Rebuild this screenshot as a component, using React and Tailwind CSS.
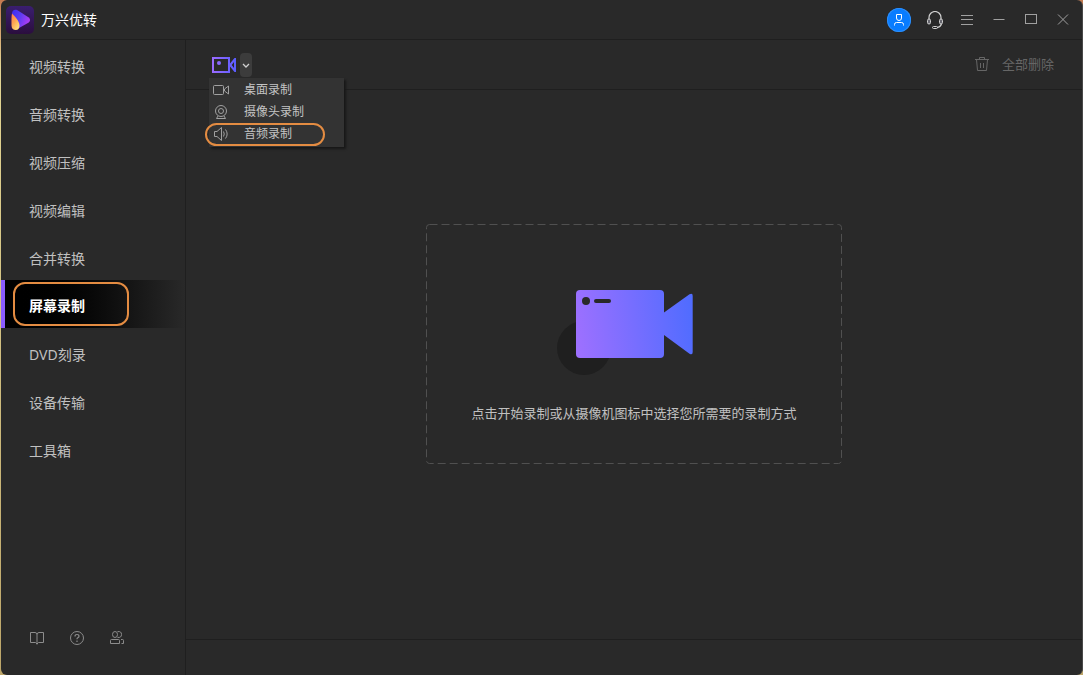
import React, { useState } from 'react';

const navItems = [
  '视频转换',
  '音频转换',
  '视频压缩',
  '视频编辑',
  '合并转换',
  '屏幕录制',
  'DVD刻录',
  '设备传输',
  '工具箱',
];

function Icon({ children, className, size = 16 }) {
  return (
    <svg
      aria-hidden="true"
      width={size}
      height={size}
      viewBox={`0 0 ${size} ${size}`}
      fill="none"
      stroke="currentColor"
      className={className}
    >
      {children}
    </svg>
  );
}

function Logo() {
  return (
    <svg aria-hidden="true" width="28" height="28" viewBox="0 0 28 28">
      <defs>
        <linearGradient id="logoBg" x1="0" y1="0" x2="0" y2="1">
          <stop offset="0" stopColor="#3a1e70" />
          <stop offset="1" stopColor="#2b0e3e" />
        </linearGradient>
        <linearGradient id="logoPlay" x1="0" y1="0" x2="1" y2="0.4">
          <stop offset="0" stopColor="#3a2cf0" />
          <stop offset="0.5" stopColor="#5a3cf2" />
          <stop offset="1" stopColor="#a93cf5" />
        </linearGradient>
        <linearGradient id="logoDrop" x1="0" y1="0" x2="0.7" y2="1">
          <stop offset="0" stopColor="#ff7a4a" />
          <stop offset="0.5" stopColor="#ffa552" />
          <stop offset="1" stopColor="#ffe07a" />
        </linearGradient>
      </defs>
      <rect width="28" height="28" rx="5" fill="url(#logoBg)" />
      <path
        d="M6 7.500C6 4.500 8.500 3 11.500 4.300L22.800 11.500Q25.300 14 22.800 16.500L13 22Z"
        fill="url(#logoPlay)"
      />
      <path
        d="M6 7.500C9 10.500 13.500 15 13.500 19.500C13.500 22.500 12 24 9.800 24C7.300 24 5.500 22.500 5.500 19.500C5.500 15 5.300 10 6 7.500Z"
        fill="url(#logoDrop)"
      />
    </svg>
  );
}

function TitleBar() {
  return (
    <header className="flex h-10 shrink-0 items-center border-b border-[#1f1f1f] pr-[11px] pl-[5px]">
      <Logo />
      <h1 className="ml-[7px] text-[14px] leading-5 text-white">万兴优转</h1>
      <div className="ml-auto flex items-center text-[#a0a0a0]">
        <button
          type="button"
          aria-label="账户"
          className="mr-3 flex size-6 items-center justify-center rounded-full bg-[#087cff] text-white ring-1 ring-[#2f8ff8] ring-inset"
        >
          <Icon size={12}>
            <path d="M3.500 0.500H8.500V4Q8.500 6.500 6 6.500Q3.500 6.500 3.500 4Z" />
            <path d="M1.500 11.500V10.500Q1.500 8.500 3.500 8.500H8.500Q10.500 8.500 10.500 10.500V11.500" />
          </Icon>
        </button>
        <button type="button" aria-label="客服" className="mr-1 flex size-6 items-center justify-center text-[#d0d0d0]">
          <Icon size={18}>
            <path d="M3 8V6.500A6 6 0 0 1 15 6.500V8M15.500 13Q14.500 16 11 16.500" strokeWidth="1.200" />
            <rect x="1.500" y="8" width="3" height="5" rx="1.500" fill="#686870" />
            <rect x="13.500" y="8" width="3" height="5" rx="1.500" fill="#686870" />
            <rect x="6.500" y="15.500" width="5" height="2" rx="1" />
          </Icon>
        </button>
        <button type="button" aria-label="菜单" className="flex h-8 w-8 items-center justify-center">
          <Icon>
            <path d="M2 3.500H14M2 7.500H14M2 12.500H14" />
          </Icon>
        </button>
        <button type="button" aria-label="最小化" className="flex h-8 w-8 items-center justify-center">
          <Icon>
            <path d="M2.500 7.500H13.500" />
          </Icon>
        </button>
        <button type="button" aria-label="最大化" className="flex h-8 w-8 items-center justify-center">
          <Icon>
            <rect x="2.500" y="2.500" width="11" height="9" />
          </Icon>
        </button>
        <button type="button" aria-label="关闭" className="flex h-8 w-6 items-center justify-center pl-2">
          <Icon>
            <path d="M3 2.500L13 12.500M13 2.500L3 12.500" />
          </Icon>
        </button>
      </div>
    </header>
  );
}

function Sidebar({ active, onSelect }) {
  return (
    <aside className="flex w-[185px] shrink-0 flex-col border-r border-[#1f1f1f]">
      <nav>
        {navItems.map((label) => {
          const on = label === active;
          return (
            <button
              key={label}
              type="button"
              onClick={() => onSelect(label)}
              aria-current={on ? 'page' : undefined}
              className={
                on
                  ? 'relative flex h-12 w-full items-center border-l-4 border-[#8b5cff] bg-linear-to-r from-black to-[#292929] pt-0.5 pl-6 text-left text-[14px] font-bold text-white'
                  : 'flex h-12 w-full items-center pt-1 pl-7 text-left text-[14px] text-[#c0c0c0]'
              }
            >
              {label}
              {on && (
                <span className="pointer-events-none absolute inset-y-0.5 left-2 w-[116px] rounded-xl border-2 border-[#e48c42]" />
              )}
            </button>
          );
        })}
      </nav>
      <div className="mt-auto flex gap-6 pb-[29px] pl-7 text-[#8c8c8c]">
        <button type="button" aria-label="使用指南">
          <Icon>
            <path d="M1.500 2.500H6Q8 2.500 8 4.500V14.500M14.500 2.500H10Q8 2.500 8 4.500M1.500 2.500V12.500H6.500L8 14L9.500 12.500H14.500V2.500" />
          </Icon>
        </button>
        <button type="button" aria-label="帮助">
          <Icon>
            <circle cx="8" cy="8" r="6.500" />
            <path d="M6 6.500Q6 4.500 8 4.500Q10 4.500 10 6.200Q10 7.200 8.800 7.700Q8 8.100 8 9.200M8 10.500V12" strokeWidth="1.200" />
          </Icon>
        </button>
        <button type="button" aria-label="社区">
          <Icon>
            <ellipse cx="6" cy="4.500" rx="2.500" ry="3" />
            <path d="M8.500 1.600Q12.500 1 12.500 4.500Q12.500 8 8.500 7.400" />
            <path d="M1.500 13.500V10.500Q1.500 9.500 2.500 9.500H9.500Q10.500 9.500 10.500 10.500V13.500ZM12 9.500H13.500Q14.500 9.500 14.500 10.500V13.500H12.500" />
          </Icon>
        </button>
      </div>
    </aside>
  );
}

function RecordMenu() {
  const items = [
    {
      label: '桌面录制',
      icon: (
        <>
          <rect x="0.500" y="3.500" width="10" height="9" rx="1" />
          <path d="M11.500 7L15.500 4V12L11.500 9Z" />
        </>
      ),
    },
    {
      label: '摄像头录制',
      icon: (
        <>
          <circle cx="8" cy="7" r="5.500" />
          <circle cx="8" cy="7" r="2.500" />
          <path d="M5 12L3.500 14.500H12.500L11 12" />
        </>
      ),
    },
    {
      label: '音频录制',
      icon: (
        <>
          <path d="M1.500 5.500H4L8.500 1.500V14.500L4 10.500H1.500Z" />
          <path d="M10.500 5.500Q12 8 10.500 10.500M12.500 3.500Q15.800 8 12.500 12.500" />
        </>
      ),
    },
  ];
  return (
    <div
      role="menu"
      className="absolute top-[38px] left-[23px] w-[135px] bg-[#333333] pt-px pb-0.5 shadow-[2px_2px_2px_#181818]"
    >
      {items.map(({ label, icon }, i) => (
        <button
          key={label}
          type="button"
          role="menuitem"
          className="relative flex h-[22px] w-full items-center gap-[15px] pl-1 text-[12px] leading-4 text-[#c4c4c4]"
        >
          <Icon className="text-[#a0a0a0]">{icon}</Icon>
          {label}
          {i === 2 && (
            <span className="pointer-events-none absolute top-0 -bottom-px -left-1 w-[120px] rounded-full border-2 border-[#e48c42]" />
          )}
        </button>
      ))}
    </div>
  );
}

function Toolbar() {
  const [open, setOpen] = useState(true);
  return (
    <div className="relative flex h-[50px] shrink-0 items-center justify-between border-b border-[#1f1f1f] pr-7 pl-[26px]">
      <div className="flex items-center gap-1">
        <button type="button" aria-label="开始录制">
          <svg aria-hidden="true" width="24" height="16" viewBox="0 0 24 16" fill="none">
            <defs>
              <linearGradient id="recStroke" gradientUnits="userSpaceOnUse" x1="0" y1="0" x2="24" y2="0">
                <stop offset="0" stopColor="#9b6bff" />
                <stop offset="1" stopColor="#5a5cff" />
              </linearGradient>
            </defs>
            <rect x="1" y="1" width="16" height="14" stroke="url(#recStroke)" strokeWidth="2" />
            <path
              d="M18 6.500L22.500 1H24V15H22.500L18 9.500ZM22 5L19.700 8L22 11Z"
              fill="url(#recStroke)"
              fillRule="evenodd"
            />
            <circle cx="7" cy="6" r="2" fill="url(#recStroke)" />
          </svg>
        </button>
        <button
          type="button"
          aria-label="录制方式"
          aria-expanded={open}
          onClick={() => setOpen(!open)}
          className="flex h-6 w-3 items-center justify-center rounded-sm bg-[#3c3c3c] text-[#d0d0d0]"
        >
          <Icon size={8}>
            <path d="M1 3L4 6L7 3" strokeWidth="1.300" />
          </Icon>
        </button>
      </div>
      {open && <RecordMenu />}
      <button type="button" className="flex items-center gap-3 pb-0.5 text-[13px] leading-5 text-[#666666]">
        <Icon>
          <path d="M1 3.500H15M5.500 3.500V1.500H10.500V3.500M2.500 3.500L3.500 14.500H12.500L13.500 3.500M6.500 7V12M9.500 7V12" />
        </Icon>
        全部删除
      </button>
    </div>
  );
}

function StartPanel() {
  return (
    <button
      type="button"
      className="relative flex h-60 w-[416px] flex-col items-center pt-[66px] text-[13px] leading-5 text-[#c0c0c0]"
    >
      <svg aria-hidden="true" className="absolute inset-0 h-full w-full" fill="none">
        <rect
          x="0.500"
          y="0.500"
          width="415"
          height="239"
          rx="3"
          stroke="#505050"
          strokeDasharray="8 4"
        />
      </svg>
      <svg aria-hidden="true" width="154" height="86" viewBox="0 0 154 86">
        <defs>
          <linearGradient id="camera" gradientUnits="userSpaceOnUse" x1="19" y1="42" x2="136" y2="26">
            <stop offset="0" stopColor="#9d70ff" />
            <stop offset="1" stopColor="#506cff" />
          </linearGradient>
        </defs>
        <circle cx="27" cy="58" r="27" fill="#1f1f1f" />
        <rect x="19" width="88" height="68" rx="4" fill="url(#camera)" />
        <path d="M107 22.500L132.500 4.300Q135.700 2.500 135.700 6V62Q135.700 65.500 132.500 63.700L107 45Z" fill="url(#camera)" />
        <circle cx="29" cy="11" r="4" fill="#292929" />
        <rect x="37" y="9" width="17" height="4" rx="2" fill="#292929" />
      </svg>
      <span className="mt-[27px]">点击开始录制或从摄像机图标中选择您所需要的录制方式</span>
    </button>
  );
}

export default function App() {
  const [active, setActive] = useState('屏幕录制');
  return (
    <div className="flex min-h-screen bg-linear-to-b from-[#c47a50] via-[#e3d694] via-10% to-[#bda66a] pl-px font-['Noto_Sans','Noto_Sans_CJK_SC',sans-serif]">
      <div className="flex min-w-0 flex-1 flex-col overflow-hidden rounded-md border-r border-[#484848] bg-[#292929]">
        <TitleBar />
        <div className="flex flex-1">
          <Sidebar active={active} onSelect={setActive} />
          <main className="flex min-w-0 flex-1 flex-col">
            <Toolbar />
            <section className="flex flex-1 items-center justify-center pb-[42px]">
              <StartPanel />
            </section>
            <footer className="h-9 shrink-0 border-t border-[#1f1f1f]" />
          </main>
        </div>
      </div>
    </div>
  );
}
